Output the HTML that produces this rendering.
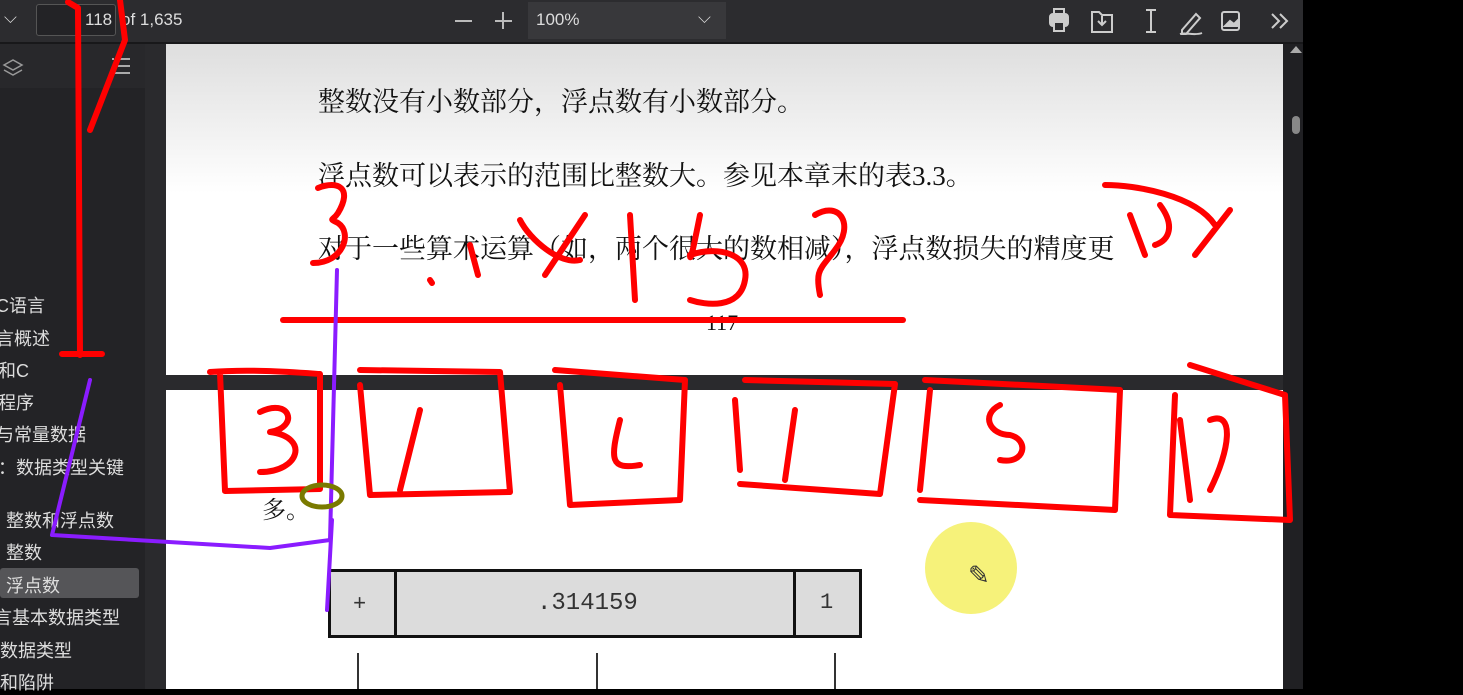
<!DOCTYPE html>
<html><head><meta charset="utf-8"><style>
body{margin:0;width:1463px;height:689px;overflow:hidden;background:#000;position:relative;font-family:"Liberation Sans","Noto Sans CJK SC",sans-serif}
.tb{position:absolute;left:0;top:0;width:1303px;height:42px;background:#2c2c2f;border-bottom:2px solid #18181a}
.side{position:absolute;left:0;top:44px;width:145px;height:645px;background:#232326}
.gap{position:absolute;left:145px;top:44px;width:21px;height:645px;background:#2a2a2d}
.page{position:absolute;left:166px;top:44px;width:1117px;height:331px;background:linear-gradient(#dedede,#fff 45%)}
.page2{position:absolute;left:166px;top:390px;width:1117px;height:299px;background:#fff}
.sep{position:absolute;left:166px;top:375px;width:1117px;height:15px;background:#2a2a2d}
.sb{position:absolute;left:1283px;top:44px;width:20px;height:645px;background:#202023}
.t{position:absolute;font-size:27px;color:#111;font-family:"Liberation Serif","Noto Serif CJK SC",serif;white-space:nowrap}
.s{position:absolute;font-size:18px;color:#ddd;white-space:nowrap}
.w{color:#ddd;position:absolute;font-size:17px}
</style></head><body>
<div class="tb"></div>
<div style="position:absolute;left:36px;top:4px;width:78px;height:30px;border:1px solid #555;border-radius:3px;background:#232326"></div>
<div class="w" style="left:85px;top:10px">118</div>
<div class="w" style="left:121px;top:10px">of 1,635</div>
<div class="w" style="left:4px;top:8px">⌵</div>
<div style="position:absolute;left:455px;top:20px;width:17px;height:2px;background:#bbb"></div>
<div style="position:absolute;left:495px;top:20px;width:17px;height:2px;background:#bbb"></div>
<div style="position:absolute;left:502px;top:12px;width:2px;height:17px;background:#bbb"></div>
<div style="position:absolute;left:528px;top:2px;width:198px;height:37px;background:#38383b"></div>
<div class="w" style="left:536px;top:10px">100%</div>
<div class="w" style="left:698px;top:8px">⌵</div>
<svg style="position:absolute;left:1040px;top:4px" width="260" height="34" fill="none" stroke="#ccc" stroke-width="2">
<rect x="10" y="10" width="18" height="12" rx="3" fill="#ccc"/><rect x="14" y="5" width="10" height="6"/><rect x="14" y="18" width="10" height="9" fill="#2c2c2f"/>
<path d="M52 8h7l3 3h10v17H52zM62 12v9m-4-4l4 4 4-4"/>
<path d="M106 6h10M111 6v22M106 28h10"/>
<path d="M142 26l14-16 4 4-14 16h-4zM140 30c6-2 14 2 22-1"/>
<rect x="182" y="8" width="17" height="18" rx="2"/><path d="M185 22l5-5 4 3 3-3v5z" fill="#ccc"/>
<path d="M232 10l7 7-7 7M240 10l7 7-7 7"/>
</svg>
<div class="side"></div>
<div style="position:absolute;left:0;top:44px;width:145px;height:44px;background:#28282b"></div>
<svg style="position:absolute;left:2px;top:56px" width="24" height="24" fill="none" stroke="#999" stroke-width="1.5"><path d="M2 9l9-5 9 5-9 5zM2 14l9 5 9-5"/></svg>
<svg style="position:absolute;left:108px;top:56px" width="26" height="22" fill="none" stroke="#aaa" stroke-width="2"><path d="M4 3h2M10 3h12M4 10h2M10 10h12M4 17h18"/></svg>
<div style="position:absolute;left:0;top:568px;width:139px;height:30px;background:#555558;border-radius:3px"></div>
<div class="s" style="left:-4px;top:292px">C语言</div>
<div class="s" style="left:-4px;top:325px">言概述</div>
<div class="s" style="left:-2px;top:357px">和C</div>
<div class="s" style="left:-2px;top:389px">程序</div>
<div class="s" style="left:-4px;top:421px">与常量数据</div>
<div class="s" style="left:-2px;top:454px">：数据类型关键</div>
<div class="s" style="left:6px;top:507px">整数和浮点数</div>
<div class="s" style="left:6px;top:539px">整数</div>
<div class="s" style="left:6px;top:572px">浮点数</div>
<div class="s" style="left:-6px;top:604px">言基本数据类型</div>
<div class="s" style="left:0;top:637px">数据类型</div>
<div class="s" style="left:0;top:669px">和陷阱</div>
<div class="gap"></div>
<div class="page"></div><div class="sep"></div><div class="page2"></div>
<div class="sb"></div>
<div style="position:absolute;left:1290px;top:46px;border:6px solid transparent;border-bottom:7px solid #aaa;border-top:0"></div>
<div style="position:absolute;left:1292px;top:116px;width:8px;height:18px;border-radius:4px;background:#888"></div>
<div class="t" style="left:318px;top:80px">整数没有小数部分，浮点数有小数部分。</div>
<div class="t" style="left:318px;top:154px">浮点数可以表示的范围比整数大。参见本章末的表3.3。</div>
<div class="t" style="left:318px;top:227px">对于一些算术运算（如，两个很大的数相减），浮点数损失的精度更</div>
<div class="t" style="left:706px;top:310px;font-size:22px">117</div>
<div class="t" style="left:262px;top:490px;font-size:24px">多。</div>
<div style="position:absolute;left:328px;top:569px;width:528px;height:63px;background:#dcdcdc;border:3px solid #111"></div>
<div style="position:absolute;left:394px;top:569px;width:3px;height:68px;background:#111"></div>
<div style="position:absolute;left:793px;top:569px;width:3px;height:68px;background:#111"></div>
<div style="position:absolute;left:353px;top:592px;font:22px 'Liberation Mono',monospace;color:#333">+</div>
<div style="position:absolute;left:537px;top:590px;font:24px 'Liberation Mono',monospace;color:#333">.314159</div>
<div style="position:absolute;left:820px;top:590px;font:22px 'Liberation Mono',monospace;color:#333">1</div>
<div style="position:absolute;left:357px;top:653px;width:2px;height:36px;background:#333"></div>
<div style="position:absolute;left:596px;top:653px;width:2px;height:36px;background:#333"></div>
<div style="position:absolute;left:834px;top:653px;width:2px;height:36px;background:#333"></div>
<div style="position:absolute;left:925px;top:522px;width:92px;height:92px;border-radius:50%;background:#f6f27a"></div>
<div style="position:absolute;left:968px;top:560px;font-size:26px;color:#333">✎</div>
<svg style="position:absolute;left:0;top:0" width="1463" height="689" fill="none" stroke-linecap="round" stroke-linejoin="round">
<g stroke="#f00" stroke-width="6">
<path d="M68 2L78 8 80 355M62 354h40M120 0l5 40-35 90"/>
<path d="M318 188c20-8 35 0 20 25-5 8-10 5 0 10 15 10 5 40-25 40M430 280l2 3M470 245l8 30M520 220c10 20 40 45 60 40M585 215l-40 60M630 215l5 85M700 215c-5 25-10 50-10 40 30-10 60 0 55 25-5 30-40 25-55 20M815 215c25-15 40 10 20 35-15 20-20 20-15 45M1105 185c30 0 90 10 110 40M1130 215l15 40M1160 205c15 20 10 35-5 40M1195 255l35-45"/>
<path d="M283 320h620"/>
<path d="M210 372c40-3 80 0 110 2l0 115-95 2-5-118M260 412c30-15 40 15 10 20 40 5 30 40-10 40M360 370l140 2 10 120-140 3-10-110M420 410l-20 80M555 370l130 10-5 120-110 5-10-120M620 420c-10 40-10 50 20 45M745 380l150 4-15 110-140-10M735 400l5 70M795 410l-10 70M925 380l195 10-5 120-195-10M930 390l-10 100M1000 405c-20 10-10 30 10 30 20 5 15 30-10 25M1190 365l95 30 5 125-120-5 5-120M1180 420l10 80M1210 420c25-10 20 30 0 70"/>
</g>
<path d="M90 380L52 535 270 548 330 540 337 270M332 520L327 610" stroke="#8a1cff" stroke-width="4"/>
<ellipse cx="322" cy="496" rx="20" ry="11" stroke="#7a7a00" stroke-width="5"/>
</svg>
</body></html>
